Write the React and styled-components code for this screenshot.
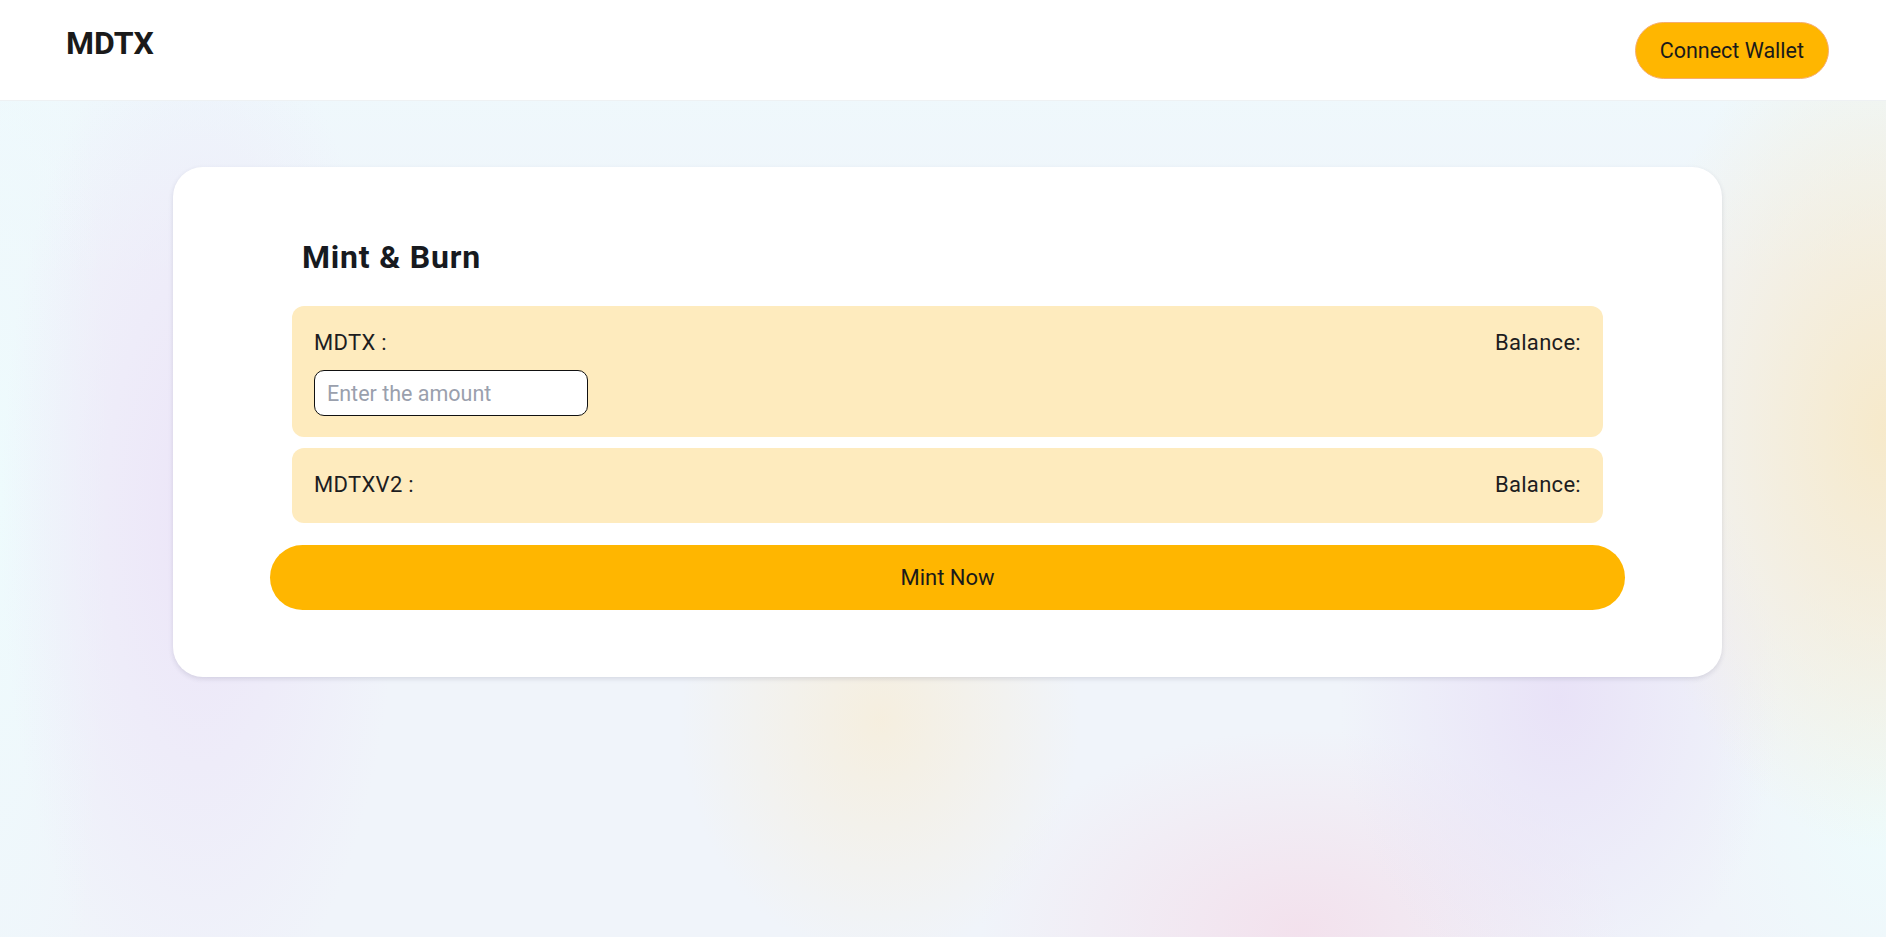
import React, { useState } from "react";
import styled, { createGlobalStyle } from "styled-components";

const GlobalStyle = createGlobalStyle`
  html, body {
    margin: 0;
    padding: 0;
  }
  body {
    font-family: Roboto, "Liberation Sans", Arial, sans-serif;
    color: #1b1b1b;
  }
  * {
    box-sizing: border-box;
  }
`;

const Page = styled.div`
  min-height: 100vh;
  display: flex;
  flex-direction: column;
  background-color: #f0f4fa;
  background-image:
    radial-gradient(ellipse 260px 420px at 1886px 430px, rgba(247, 233, 200, 0.95), rgba(247, 233, 200, 0) 100%),
    radial-gradient(ellipse 220px 300px at 1560px 700px, rgba(232, 225, 247, 0.95), rgba(232, 225, 247, 0) 100%),
    radial-gradient(ellipse 180px 260px at 1880px 820px, rgba(238, 251, 252, 1), rgba(238, 251, 252, 0) 100%),
    radial-gradient(ellipse 320px 200px at 1300px 930px, rgba(243, 224, 236, 0.95), rgba(243, 224, 236, 0) 100%),
    radial-gradient(ellipse 200px 240px at 880px 720px, rgba(246, 238, 220, 0.9), rgba(246, 238, 220, 0) 100%),
    radial-gradient(ellipse 200px 520px at 200px 520px, rgba(236, 228, 248, 0.95), rgba(236, 228, 248, 0) 100%),
    radial-gradient(ellipse 110px 700px at 0px 500px, rgba(238, 251, 253, 1), rgba(238, 251, 253, 0) 100%),
    linear-gradient(180deg, #eefafd 0%, rgba(238, 250, 253, 0) 30%);
`;

const Header = styled.header`
  height: 101px;
  display: flex;
  justify-content: space-between;
  align-items: flex-start;
  padding: 22px 57px 0 66px;
  background: #ffffff;
  border-bottom: 1px solid #eef1f3;
`;

const Logo = styled.div`
  margin-top: 2px;
  font-size: 32px;
  font-weight: 700;
  color: #1a1a1a;
`;

const PillButton = styled.button`
  font-family: inherit;
  color: #1a1a1a;
  background: #ffb600;
  border: ${(p) => (p.$outlined ? "1px solid #f6ad6e" : "none")};
  border-radius: 999px;
  cursor: pointer;
  font-size: ${(p) => (p.$wide ? "22px" : "21.5px")};
  height: ${(p) => (p.$wide ? "65px" : "57px")};
  padding: 0 24px;
  width: ${(p) => (p.$wide ? "100%" : "auto")};
`;

const Main = styled.main`
  padding: 66px 164px 0 173px;
`;

const Card = styled.section`
  background: #ffffff;
  border-radius: 30px;
  box-shadow: 0 2px 5px rgba(60, 60, 90, 0.14);
  padding: 71px 97px 67px;
  display: flex;
  flex-direction: column;
`;

const Title = styled.h2`
  margin: 0 0 30px 32px;
  font-size: 32px;
  font-weight: 700;
  letter-spacing: 0.8px;
  color: #171a1f;
`;

const TokenRow = styled.div`
  margin: 0 22px ${(p) => (p.$last ? "22px" : "11px")};
  background: #feebbe;
  border-radius: 12px;
  padding: 24px 22px ${(p) => (p.$withInput ? "21px" : "25px")};
  display: flex;
  flex-direction: column;
`;

const RowTop = styled.div`
  display: flex;
  justify-content: space-between;
  font-size: 22px;
  line-height: 26px;
  letter-spacing: 0.3px;
  color: #1d1d1f;
`;

const AmountInput = styled.input`
  margin-top: 14px;
  width: 274px;
  height: 46px;
  border: 1px solid #111;
  border-radius: 10px;
  background: #fff;
  padding: 0 12px;
  font-family: inherit;
  font-size: 21.5px;
  color: #1b1b1b;
  outline: none;
  &::placeholder {
    color: #9aa0ad;
  }
`;

export default function App() {
  const [amount, setAmount] = useState("");

  return (
    <Page>
      <GlobalStyle />
      <Header>
        <Logo>MDTX</Logo>
        <PillButton $outlined>Connect Wallet</PillButton>
      </Header>
      <Main>
        <Card>
          <Title>Mint &amp; Burn</Title>
          <TokenRow $withInput>
            <RowTop>
              <span>MDTX :</span>
              <span>Balance:</span>
            </RowTop>
            <AmountInput
              placeholder="Enter the amount"
              value={amount}
              onChange={(e) => setAmount(e.target.value)}
            />
          </TokenRow>
          <TokenRow $last>
            <RowTop>
              <span>MDTXV2 :</span>
              <span>Balance:</span>
            </RowTop>
          </TokenRow>
          <PillButton $wide>Mint Now</PillButton>
        </Card>
      </Main>
    </Page>
  );
}
